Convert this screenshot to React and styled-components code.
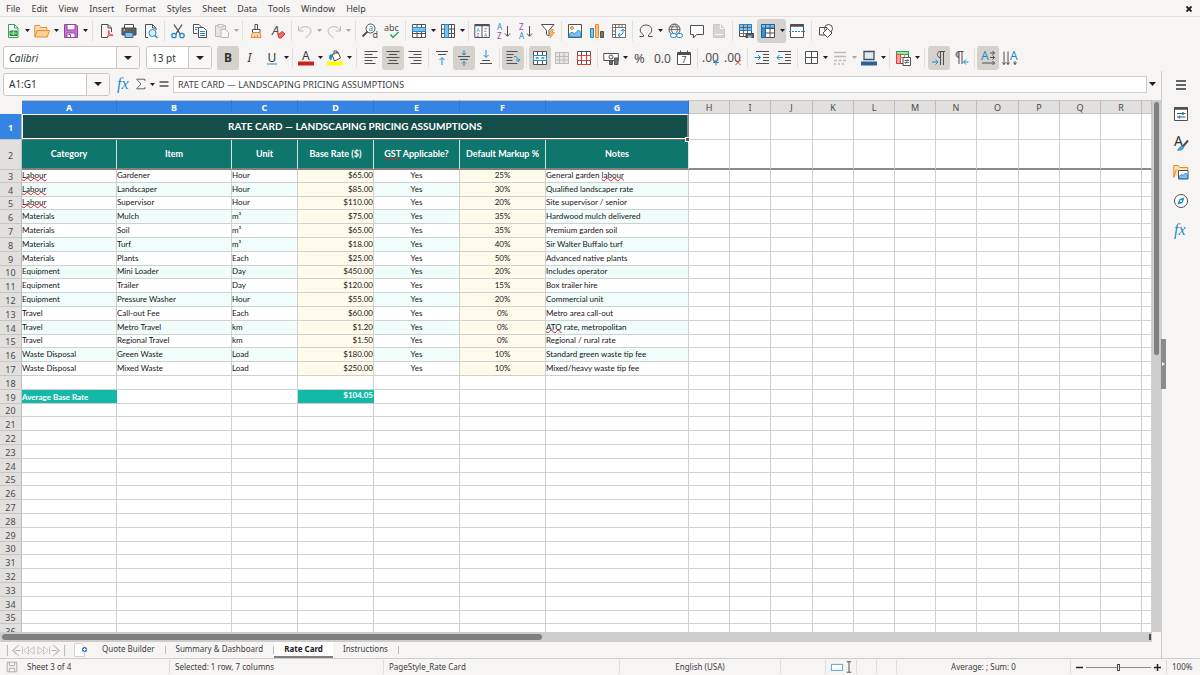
import { useState } from 'react';
import styled, { createGlobalStyle, css } from 'styled-components';

const GlobalStyle = createGlobalStyle`
  * {
    box-sizing: border-box;
  }
  body {
    margin: 0;
    overflow: hidden;
    background: #f6f5f4;
    color: #3d3d3d;
    font-family: "Noto Sans", sans-serif;
    font-size: 9px;
    line-height: 12px;
  }
  button, input, select {
    font: inherit;
    color: inherit;
    margin: 0;
    padding: 0;
    border: none;
    outline: none;
    background: none;
  }
`;

const Window = styled.div`
  display: flex;
  flex-direction: column;
  height: 100vh;
`;

const MenuBar = styled.nav`
  display: flex;
  align-items: center;
  height: 17px;
  padding: 1px 0 0 1px;
  border-bottom: 1px solid #e3e1df;
`;

const MenuItem = styled.button`
  padding: 0 6px 0 5px;
`;

const CloseButton = styled.button`
  display: flex;
  margin-left: auto;
  padding: 0 3px;
`;

const Toolbar = styled.div`
  display: flex;
  align-items: center;
  height: 27px;
  padding-left: 2px;
`;

const ToolButton = styled.button`
  display: flex;
  flex: none;
  align-items: center;
  justify-content: center;
  width: 22px;
  height: 24px;
  border-radius: ${({ $joined }) => ($joined ? '3px 0 0 3px' : '3px')};
  background: ${({ $on }) => ($on ? '#d5d1cd' : 'none')};
  opacity: ${({ disabled }) => (disabled ? 0.35 : 1)};
`;

const CaretButton = styled.button`
  display: flex;
  flex: none;
  align-items: center;
  justify-content: center;
  width: 7px;
  height: 24px;
  border-radius: 0 3px 3px 0;
  background: ${({ $on }) => ($on ? '#d5d1cd' : 'none')};
  opacity: ${({ disabled }) => (disabled ? 0.35 : 1)};
`;

const Separator = styled.span`
  flex: none;
  width: 1px;
  height: 20px;
  margin: ${({ $wide }) => ($wide ? '0 3px' : '0 2px')};
  background: #e2e0dd;
`;

const Combo = styled.div`
  display: flex;
  flex: none;
  width: ${({ $width }) => $width}px;
  height: 23px;
  margin: 0 5px 0 1px;
  border: 1px solid #cdc7c2;
  border-radius: 3px;
  background: #fff;
  overflow: hidden;
`;

const comboText = css`
  flex: 1;
  min-width: 0;
  padding-left: 5px;
  font-size: 10px;
  color: #2e3436;
  appearance: none;
`;

const ComboSelect = styled.select`
  ${comboText}
  font-style: ${({ $italic }) => ($italic ? 'italic' : 'normal')};
`;

const ComboInput = styled.input`
  ${comboText}
`;

const ComboArrow = styled.span`
  display: flex;
  align-items: center;
  justify-content: center;
  width: 23px;
  border-left: 1px solid #cdc7c2;
  background: #f8f7f6;
  pointer-events: none;
`;

const Main = styled.div`
  display: flex;
  flex: 1;
  min-height: 0;
`;

const Workspace = styled.main`
  display: flex;
  flex: 1;
  flex-direction: column;
  min-width: 0;
`;

const FormulaBar = styled.div`
  display: flex;
  align-items: center;
  height: 29px;
  padding: 0 5px 3px 2px;
`;

const FormulaButton = styled.button`
  display: flex;
  flex: none;
  align-items: center;
  justify-content: center;
  width: ${({ $wide }) => ($wide ? 18 : 16)}px;
  height: 24px;
`;

const FormulaInput = styled.input`
  flex: 1;
  min-width: 0;
  height: 17px;
  margin: 0 2px 0 1px;
  padding-left: 4px;
  border: 1px solid #d0ccc9;
  background: #fff;
`;

const SheetArea = styled.div`
  display: flex;
  flex: 1;
  min-height: 0;
`;

const SheetView = styled.div`
  flex: 1;
  min-width: 0;
  overflow: hidden;
  background: #fff;
`;

const Grid = styled.table`
  width: 100%;
  table-layout: fixed;
  border-spacing: 0;
  font-family: Lato, sans-serif;
  font-size: 8px;
  line-height: 11px;
  color: #141414;
`;

const ColumnHead = styled.th`
  height: 14px;
  padding: 0;
  border-top: 1px solid #c6c6c6;
  border-right: 1px solid ${({ $on }) => ($on ? '#2f78d2' : '#bdbdbd')};
  border-bottom: 1px solid ${({ $on }) => ($on ? '#3584e4' : '#c6c6c6')};
  background: ${({ $on }) => ($on ? '#3584e4' : '#e1e0df')};
  color: ${({ $on }) => ($on ? '#fff' : '#4a4a4a')};
  font-family: "Noto Sans", sans-serif;
  font-size: 9px;
  font-weight: ${({ $on }) => ($on ? 700 : 400)};
`;

const Corner = styled.th`
  padding: 0;
  background: #f6f5f4;
`;

const RowHead = styled.th`
  padding: 1px 0 0;
  border-right: 1px solid #bdbdbd;
  border-bottom: 1px solid #c6c6c6;
  background: ${({ $on }) => ($on ? '#3584e4' : '#e1e0df')};
  color: ${({ $on }) => ($on ? '#fff' : '#4a4a4a')};
  font-family: "Noto Sans", sans-serif;
  font-size: 9px;
  font-weight: ${({ $on }) => ($on ? 700 : 400)};
`;

const Row = styled.tr`
  height: ${({ $height }) => $height}px;
`;

const Cell = styled.td`
  padding: 0 0 1px;
  border-right: 1px solid #d0d0d0;
  border-bottom: 1px solid #d0d0d0;
  background: ${({ $fill }) => $fill || '#fff'};
  text-align: ${({ $align }) => $align || 'left'};
  white-space: nowrap;
  overflow: hidden;
`;

const TotalCell = styled(Cell)`
  padding-bottom: 0;
  border-right-color: #14b8a6;
  color: #fff;
  font-weight: 700;
  vertical-align: ${({ $low }) => ($low ? 'bottom' : 'top')};
`;

const TitleCell = styled.td`
  position: relative;
  padding: 0 0 1px;
  border: 1px solid #fff;
  border-right: 2px solid #7d8a89;
  border-bottom: 1px solid #6b6b6b;
  box-shadow: inset 0 -1px #fff;
  background: #134e4a;
  color: #fff;
  font-size: 10px;
  font-weight: 700;
  text-align: center;
`;

const FillHandle = styled.span`
  position: absolute;
  right: -3px;
  bottom: -3px;
  width: 5px;
  height: 5px;
  border: 1px solid #fff;
  background: #555;
`;

const HeadingCell = styled.td`
  padding: 0 0 2px;
  border-right: 1px solid #d5e6e4;
  border-bottom: 2px solid #7f7f7f;
  background: #0f766e;
  color: #fff;
  font-size: 9px;
  font-weight: 700;
  text-align: center;
  white-space: nowrap;
`;

const FrozenCell = styled(Cell)`
  border-bottom: 2px solid #8a8a8a;
`;

const Misspelt = styled.span`
  text-decoration: underline wavy #e01b24 1px;
  text-underline-offset: -1px;
  text-decoration-skip-ink: none;
`;

const VerticalScroll = styled.div`
  flex: none;
  width: 9px;
  padding: 2px;
  background: #cdcdcd;
`;

const VerticalThumb = styled.div`
  width: 5px;
  height: 48%;
  border-radius: 3px;
  background: #7f807f;
`;

const HorizontalScroll = styled.div`
  display: flex;
  justify-content: space-between;
  height: 10px;
  margin-right: 9px;
  padding: 2px 1px 2px 2px;
  background: #cdcdcd;
`;

const HorizontalThumb = styled.div`
  width: 47%;
  border-radius: 3px;
  background: #7f807f;
`;

const SplitMark = styled.span`
  width: 2px;
  background: #4a4a4a;
`;

const TabBar = styled.div`
  display: flex;
  align-items: stretch;
  height: 16px;
  font-size: 8px;
`;

const TabNav = styled.div`
  display: flex;
  align-items: center;
  padding: 0 6px;
`;

const NavButton = styled.button`
  display: flex;
`;

const AddButton = styled(NavButton)`
  margin-right: 4px;
`;

const SheetTab = styled.button`
  padding: 0 10px;
  border-bottom: 2px solid ${({ $on }) => ($on ? '#7f7f7f' : 'transparent')};
  background: ${({ $on }) => ($on ? '#fff' : 'none')};
  color: ${({ $on }) => ($on ? '#1a1a1a' : '#3d3d3d')};
  font-weight: ${({ $on }) => ($on ? 700 : 400)};
`;

const TabDivider = styled.span`
  align-self: center;
  width: 1px;
  height: 8px;
  background: #bdbab7;
`;

const Sidebar = styled.aside`
  position: relative;
  display: flex;
  flex: none;
  flex-direction: column;
  align-items: center;
  gap: 7px;
  width: 39px;
  padding-top: 3px;
  border-left: 1px solid #cfcbc8;
`;

const SidebarButton = styled.button`
  display: flex;
  align-items: center;
  justify-content: center;
  width: 22px;
  height: 22px;
`;

const SidebarGrip = styled.button`
  position: absolute;
  top: 268px;
  left: -1px;
  display: flex;
  align-items: center;
  justify-content: center;
  width: 5px;
  height: 50px;
  background: #8b8b8b;
`;

const StatusBar = styled.footer`
  display: grid;
  grid-template-columns: 170fr 214fr 236fr 161fr 45fr 31fr 20fr 20fr 174fr 96px 33px;
  height: 17px;
  border-top: 1px solid #cfcbc8;
  font-size: 8px;
`;

const StatusItem = styled.div`
  display: flex;
  align-items: center;
  justify-content: ${({ $align }) => $align || 'flex-start'};
  gap: ${({ $gap }) => $gap || 0}px;
  min-width: 0;
  padding: 0 5px;
  margin: 1px 0;
  border-right: ${({ $last }) => ($last ? 'none' : '1px solid #dedbd8')};
  white-space: nowrap;
`;

const ZoomSlider = styled.input`
  flex: 1;
  min-width: 0;
  height: 10px;
  appearance: none;
  &::-webkit-slider-runnable-track {
    height: 1px;
    background: #8b8b8b;
  }
  &::-webkit-slider-thumb {
    appearance: none;
    width: 3px;
    height: 7px;
    margin-top: -3px;
    border: 1px solid #4a4a4a;
    background: #f6f5f4;
  }
`;

const Drawing = styled.svg`
  flex: none;
  overflow: visible;
`;

const INK = '#4f4f4f';
const BLUE = '#1e8bcd';
const SKY = '#83beec';
const ORANGE = '#ed8733';
const RED = '#ed3d3b';

const gridLines = 'M1.5 2.5h13v11h-13zM1.5 6.5h13M1.5 10h13M5.5 2.5v11M10 2.5v11';
const glyph = { fontFamily: 'Noto Sans', stroke: 'none' };

const icons = {
  close: <path d="M5.500 5.500l5 5M10.500 5.500l-5 5" stroke="#222" strokeWidth="1.800" />,
  newSheet: (
    <>
      <path d="M3.500 1.500h6l3.500 3.500v9.500h-9.500z" fill="#fff" stroke="#31a354" />
      <path d="M9.500 1.500v3.500h3.500" stroke="#31a354" />
      <path d="M5 8h7v4.500h-7z" fill="#46b35c" stroke="#18823a" />
      <path d="M5 10.200h7M8.500 8v4.500" stroke="#c7edcc" strokeWidth=".7" />
    </>
  ),
  open: (
    <>
      <path d="M.8 13.500v-11h4.500l1.500 2h6v3" fill="#fbe0b4" stroke={ORANGE} />
      <path d="M3 7.500h12.500l-2.200 6.500h-12.500z" fill="#fcd18d" stroke={ORANGE} />
    </>
  ),
  save: (
    <>
      <path d="M1.500 1.500h11.500l1.500 1.500v11.500h-13z" fill="#c777d2" stroke="#9a3faa" />
      <path d="M4 1.500h8v5.500h-8zM4 10h8v4.500h-8z" fill="#fff" stroke="#9a3faa" />
      <path d="M5.500 11.500h2v3" stroke="#9a3faa" />
    </>
  ),
  pdf: (
    <>
      <path d="M9 14.500h-6.500v-13h6.500l3.500 3.500v4M9 1.500v3.500h3.500" fill="none" stroke={INK} />
      <path d="M8 14.500c2-3 2.500-5 2-6.500s-1.500 1 .5 3.200 4 1.500 3.500.8-3-.5-6 2.500" stroke={RED} />
    </>
  ),
  print: (
    <>
      <path d="M3.500 5v-3.500h9v3.500" fill="#fff" stroke={INK} />
      <path d="M1 5h14v7h-14z" fill="#5d6266" stroke="#44484b" />
      <path d="M4 9.500h8v5h-8z" fill={SKY} stroke="#31678e" />
      <path d="M2.500 7h1.500" stroke="#fff" />
    </>
  ),
  preview: (
    <>
      <path d="M5 14.500h-2.500v-13h7l3.500 3.500v2M9.500 1.500v3.500h3.500" stroke={INK} />
      <circle cx="9.500" cy="10" r="3.500" fill="#d8ecfa" stroke={BLUE} />
      <path d="M12 12.500l2.500 2.500" stroke={BLUE} strokeWidth="1.500" />
    </>
  ),
  cut: (
    <>
      <path d="M4 1.500l6.500 10M12 1.500l-6.500 10" stroke={INK} strokeWidth="1.300" />
      <circle cx="4" cy="12.500" r="2.200" stroke={BLUE} strokeWidth="1.300" />
      <circle cx="12" cy="12.500" r="2.200" stroke={BLUE} strokeWidth="1.300" />
    </>
  ),
  copy: (
    <>
      <path d="M5.500 10.500h-4v-9h5.500l2.500 2.500" fill="#fff" stroke={INK} />
      <path d="M6.500 4.500h5l3 3v7h-8z" fill="#fff" stroke={INK} />
      <path d="M8 8.500h5M8 10.500h5M8 12.500h5M3 4.500h3M3 6.500h2" stroke={BLUE} />
    </>
  ),
  paste: (
    <>
      <path d="M1.500 2.500h10v11h-10z" fill="#c9c9c9" stroke={INK} />
      <path d="M4 1.500h5v2.500h-5z" fill="#fff" stroke={INK} />
      <path d="M7 6.500h4.500l3 3v5h-7.500z" fill="#fff" stroke={INK} />
    </>
  ),
  brush: (
    <>
      <path d="M7 1.500h2.500v5h-2.500zM4.500 6.500h7.500v3h-7.500z" fill="#fff" stroke={INK} />
      <path d="M4.500 9.500l-1.500 5h10l-1-5" fill="#fcd6a1" stroke={ORANGE} />
      <path d="M6.500 12.500v2M9.500 12v2.500" stroke={ORANGE} />
    </>
  ),
  clear: (
    <>
      <text x="2" y="11.500" fontSize="13" fontStyle="italic" fill={INK} {...glyph}>A</text>
      <path d="M8 12l4-3.500 3 2.500-4 4h-2z" fill="#f06a6a" stroke="#d33" />
    </>
  ),
  undo: <path d="M1.500 3v5h5M2 7.500c3-6 12-4.500 12 .5 0 3-2.500 4.500-5.500 6.500" stroke={INK} />,
  redo: <path d="M14.500 3v5h-5M14 7.500c-3-6-12-4.500-12 .5 0 3 2.500 4.500 5.500 6.500" stroke={INK} />,
  find: (
    <>
      <circle cx="8.500" cy="5.500" r="4.500" fill="#fff" stroke={INK} />
      <path d="M5.500 8.500l-5 5" stroke={INK} strokeWidth="1.800" />
      <text x="6.500" y="7.500" fontSize="8" fill={BLUE} {...glyph}>a</text>
      <text x="10.500" y="15" fontSize="9" fill={INK} {...glyph}>d</text>
    </>
  ),
  spell: (
    <>
      <text x="0" y="8" fontSize="9" fill={INK} {...glyph}>abc</text>
      <path d="M6.500 11.500l2.500 3 5.500-5.500" stroke="#27a65a" strokeWidth="1.500" />
    </>
  ),
  row: (
    <>
      <path d="M1.500 1.500h13v13h-13zM1.500 10.500h13M6 1.500v13M10.500 1.500v13" fill="#fff" stroke={INK} />
      <path d="M1.500 4.500h13v4h-13z" fill={SKY} stroke={BLUE} />
    </>
  ),
  column: (
    <>
      <path d="M1.500 1.500h13v13h-13zM1.500 6h13M1.500 10.500h13M11.500 1.500v13" fill="#fff" stroke={INK} />
      <path d="M4.500 1.500h4v13h-4z" fill={SKY} stroke={BLUE} />
    </>
  ),
  sort: (
    <>
      <path d="M.8 1.500h14.500v13h-14.500zM8 1.500v13" fill="#fff" stroke={INK} />
      <path d="M.8 2.300h14.500" stroke={INK} strokeWidth="1.800" />
      <text x="2.500" y="8.500" fontSize="5" fill={BLUE} {...glyph}>A</text>
      <text x="2.500" y="14" fontSize="5" fill="#a148b5" {...glyph}>Z</text>
      <text x="10" y="8.500" fontSize="5" fill="#a148b5" {...glyph}>Z</text>
      <text x="10" y="14" fontSize="5" fill={BLUE} {...glyph}>A</text>
    </>
  ),
  sortUp: (
    <>
      <text x="1" y="6.500" fontSize="8" fill={BLUE} {...glyph}>A</text>
      <text x="1" y="15.500" fontSize="8" fill="#a148b5" {...glyph}>Z</text>
      <path d="M11.500 3v10M9 10.500l2.500 2.800 2.500-2.800" stroke={INK} />
    </>
  ),
  sortDown: (
    <>
      <text x="1" y="6.500" fontSize="8" fill="#a148b5" {...glyph}>Z</text>
      <text x="1" y="15.500" fontSize="8" fill={BLUE} {...glyph}>A</text>
      <path d="M11.500 3v10M9 10.500l2.500 2.800 2.500-2.800" stroke={INK} />
    </>
  ),
  filter: (
    <>
      <path d="M1.500 1.500h12.500l-5 6v5.500l-2.500-1.500v-4z" fill="#fff" stroke={INK} />
      <path d="M11.500 6.500l-2.500 4.500h2l-1 4 4.500-5.500h-2.500l1.500-3z" fill="#fcc27a" stroke={ORANGE} strokeWidth=".8" />
    </>
  ),
  image: (
    <>
      <path d="M1.500 1.500h13v13h-13z" fill="#fff" stroke={INK} />
      <circle cx="5" cy="5" r="1.500" fill="#fcc27a" stroke={ORANGE} />
      <path d="M2 14v-2.500l3-2.500 2.500 2 4-4 2.500 2.500v4.500z" fill={SKY} stroke={BLUE} />
    </>
  ),
  chart: (
    <>
      <path d="M1.500 5.500h3v9h-3z" fill={SKY} stroke={BLUE} />
      <path d="M6.500 1.500h3v13h-3z" fill="#fcc27a" stroke={ORANGE} />
      <path d="M11.500 8.500h3v6h-3z" fill="#777" stroke={INK} />
    </>
  ),
  pivot: (
    <>
      <path d="M1.500 1.500h13v13h-13zM1.500 4.500h13M4.500 1.500v13M8 1.500v3M11 1.500v3M1.500 8h3M1.500 11.500h3" fill="#fff" stroke={INK} strokeWidth=".8" />
      <path d="M7.500 12h2.500l2-2v-3.500M9 9.800l-2 2.200 2 2.200M9.800 8.200l2.200-2 2.200 2" stroke={BLUE} />
    </>
  ),
  omega: <path d="M1.500 13.500h4v-1.500c-6-4-3-10 2.500-10s8.500 6 2.500 10v1.500h4" stroke={INK} />,
  link: (
    <>
      <circle cx="7.500" cy="6.500" r="5.500" stroke={INK} />
      <path d="M2 6.500h11M7.500 1c-4 4-4 7 0 11M7.500 1c4 4 4 7 0 11M3 3.800h9" stroke={INK} strokeWidth=".8" />
      <rect x="3.500" y="10.500" width="6" height="4" rx="2" fill="#f6f5f4" stroke={BLUE} />
      <rect x="9.500" y="10.500" width="6" height="4" rx="2" fill="#f6f5f4" stroke={BLUE} />
    </>
  ),
  comment: <path d="M1.500 2.500h13v9h-7l-3 3.500v-3.500h-3z" fill="#fff" stroke={INK} />,
  pageHeader: (
    <>
      <path d="M2.500 1.500h7l4 4v9h-11z" fill="#999" stroke="#777" />
      <path d="M4 11.500h8M9.500 1.500v4h4" stroke="#fff" />
    </>
  ),
  printArea: (
    <>
      <path d="M1.500 1.500h12v12h-12z" fill="#fff" stroke={INK} />
      <path d="M1.500 1.500h12v6h-12z" fill={SKY} stroke={BLUE} />
      <path d="M1.500 4.500h12M5.500 1.500v12M9.500 1.500v12M1.500 10.500h12" stroke={INK} strokeWidth=".8" />
      <path d="M8 10.500h7.500v4h-7.500z" fill="#5d6266" stroke="#44484b" />
      <path d="M10 12.500h3.500v2.500h-3.500z" fill={SKY} />
    </>
  ),
  freeze: (
    <>
      <path d="M1.500 1.500h13v13h-13zM5.500 5.500h9M5.500 10h9M10 1.500v13" fill="#fff" stroke={INK} />
      <path d="M1.500 1.500h4v13h-4z" fill="#3a8fd0" stroke="#1c659c" />
      <path d="M1.500 1.500h13v3.500h-13z" fill={SKY} stroke="#1c659c" />
      <path d="M5.500 1.500v3.500M10 1.500v3.500" stroke="#1c659c" />
    </>
  ),
  split: (
    <>
      <path d="M1.500 1.500h13v13h-13z" fill="#fff" stroke={INK} />
      <path d="M1.500 2.500h13" stroke={INK} strokeWidth="2.500" />
      <path d="M0 8.500h16" stroke={BLUE} strokeDasharray="2 1" />
    </>
  ),
  shapes: (
    <>
      <circle cx="10.500" cy="5.500" r="4" fill="#fff" stroke={INK} />
      <path d="M1.500 4.500h7.500v7.500h-7.500z" stroke={INK} />
      <path d="M9.500 5.500l4.500 4.500-4.500 4.500-4.500-4.500z" fill="#fff" stroke={INK} />
    </>
  ),
  bold: <text x="4" y="12" fontSize="12" fontWeight="700" fill="#333" {...glyph}>B</text>,
  italic: <text x="5.500" y="12" fontSize="12" fontStyle="italic" fill="#333" {...glyph}>I</text>,
  underline: (
    <>
      <text x="3.500" y="12" fontSize="12" fill="#333" {...glyph}>U</text>
      <path d="M3 14h10" stroke={BLUE} />
    </>
  ),
  fontColor: (
    <>
      <text x="4" y="10" fontSize="12" fill="#333" {...glyph}>A</text>
      <path d="M0 13.500h16" stroke="#c9211e" strokeWidth="4" />
    </>
  ),
  fillColor: (
    <>
      <path d="M5 4.500l6-2.500 2.500 6-6 3z" fill="#fff" stroke={INK} />
      <path d="M7 4.500v-3.500h3v3" stroke={INK} />
      <path d="M3 5h2l-1 5-1.500-2z" fill={BLUE} stroke={BLUE} />
      <path d="M0 13.500h16" stroke="#ff0" strokeWidth="4" />
    </>
  ),
  alignLeft: <path d="M1.500 1.500h13M1.500 4.500h8M1.500 7.500h13M1.500 10.500h8M1.500 13.500h11" stroke={INK} />,
  alignCenter: <path d="M1.500 1.500h13M4 4.500h8M1.500 7.500h13M4 10.500h8M2.500 13.500h11" stroke={INK} />,
  alignRight: <path d="M1.500 1.500h13M6.500 4.500h8M1.500 7.500h13M6.500 10.500h8M3.500 13.500h11" stroke={INK} />,
  alignTop: (
    <>
      <path d="M2 1.500h12M4 4.500h8" stroke={INK} />
      <path d="M8 15v-7M5.500 10l2.500-2.500 2.500 2.500" stroke={BLUE} />
    </>
  ),
  alignMiddle: (
    <>
      <path d="M2 6.500h12M4 9.500h8" stroke={INK} />
      <path d="M8 0v5M6 3l2 2 2-2M8 16v-4.500M6 13.500l2-2 2 2" stroke={BLUE} />
    </>
  ),
  alignBottom: (
    <>
      <path d="M4 10.500h8M2 13.500h12" stroke={INK} />
      <path d="M8 0v7M5.500 5l2.500 2.500 2.500-2.500" stroke={BLUE} />
    </>
  ),
  wrap: (
    <>
      <path d="M1.500 1.500h11M1.500 4.500h7M1.500 7.500h6M1.500 10.500h6M1.500 13.500h11" stroke={INK} />
      <path d="M9 6.500c3 0 4 1.500 4.500 4M11 9.500l2.500 2 1.500-2.500" stroke={BLUE} />
    </>
  ),
  merge: (
    <>
      <path d="M1.500 1.500h13v13h-13zM5.500 1.500v13M10.500 1.500v13" fill="#fff" stroke={INK} />
      <path d="M1.500 5.500h13v5h-13z" fill="#fff" stroke={BLUE} />
      <path d="M3.500 8h3.500M9 8h3.500M5 6.800v2.400M11 6.800v2.400" stroke={BLUE} />
    </>
  ),
  mergeCells: <path d={gridLines} fill="#ccc" stroke={INK} />,
  unmerge: (
    <>
      <path d="M1.500 1.500h13v13h-13zM5.500 1.500v13M10.500 1.500v13" fill="#fff" stroke={INK} />
      <path d="M1.500 5.500h13v5h-13zM5.500 5.500v5M10.500 5.500v5M1.500 14.500h13" fill="#fff" stroke={RED} />
    </>
  ),
  currency: (
    <>
      <path d="M.8 3.500h14.500v7h-14.500z" fill="#fff" stroke={INK} />
      <circle cx="8" cy="7" r="2" stroke={INK} />
      <path d="M6.500 11h3v3.500h-3zM11.500 8h3.500v6.500h-3.500z" fill="#777" stroke={INK} />
    </>
  ),
  percent: <text x="2" y="12.500" fontSize="13" fill={INK} {...glyph}>%</text>,
  number: <text x="0" y="12.500" fontSize="12" fill={INK} {...glyph}>0.0</text>,
  date: (
    <>
      <path d="M1.500 2.500h13v12h-13zM4.500 .5v3M11.500 .5v3" fill="#fff" stroke={INK} />
      <path d="M1.500 4h13" stroke={INK} strokeWidth="2" />
      <text x="5.500" y="13" fontSize="9" fill={INK} {...glyph}>7</text>
    </>
  ),
  addDecimal: (
    <>
      <text x="-1" y="12" fontSize="12" fill={INK} {...glyph}>.00</text>
      <path d="M13 9.500v6M10 12.500h6" stroke={BLUE} />
    </>
  ),
  dropDecimal: (
    <>
      <text x="-1" y="12" fontSize="12" fill={INK} {...glyph}>.00</text>
      <path d="M10.500 10l5 5M15.500 10l-5 5" stroke={RED} />
    </>
  ),
  indent: (
    <>
      <path d="M2 1.500h13M9 4.500h6M9 7.500h6M9 10.500h6M2 13.500h13" stroke={INK} />
      <path d="M.5 7.500h6M4 5l2.500 2.500-2.500 2.500" stroke={BLUE} />
    </>
  ),
  outdent: (
    <>
      <path d="M2 1.500h13M9 4.500h6M9 7.500h6M9 10.500h6M2 13.500h13" stroke={INK} />
      <path d="M1 7.500h6M3.500 5l-2.500 2.500 2.500 2.500" stroke={BLUE} />
    </>
  ),
  borders: <path d="M2.500 1.500h12v12h-12zM8.500 1.500v12M2.500 7.500h12" fill="#fff" stroke={INK} />,
  borderStyle: <path d="M2 2.500h12M2 6.500h12M2 10.500h3M6.500 10.500h3M11 10.500h3M2 14h2M6 14h2M10 14h2" stroke={INK} strokeWidth="1.500" />,
  borderColor: (
    <>
      <path d="M3 1.500h10v8h-10z" fill="#d8ecfa" stroke={INK} strokeWidth="1.300" />
      <path d="M0 13.500h16" stroke="#2a6099" strokeWidth="4" />
    </>
  ),
  conditional: (
    <>
      <path d="M1.500 1.500h12v12h-12z" fill="#fff" stroke={INK} />
      <path d="M1.500 1.500h12v3h-12z" fill="#9be0ae" stroke="#27a65a" />
      <path d="M1.500 4.500h4v9h-4z" fill="#f9a0a0" stroke={RED} />
      <path d="M5.500 7.500h8M9.500 4.500v4" stroke={ORANGE} />
      <path d="M8 7.500h7.500v8h-7.500z" fill="#fff" stroke={INK} />
      <path d="M9.500 10.500h4.500M9.500 12.500h4.500M13 9l-2.500 5" stroke={INK} strokeWidth=".8" />
    </>
  ),
  ltr: (
    <>
      <path d="M14 1.500h-5c-3.500 0-3.500 6 0 6M9.500 1.500v13.500M12.500 1.500v13.500" fill="none" stroke={INK} />
      <path d="M1 12h6M4.500 9.500l2.500 2.500-2.500 2.500" stroke={BLUE} />
    </>
  ),
  rtl: (
    <>
      <path d="M6 1.500c-4 0-4 6 0 6z" fill="#aaa" />
      <path d="M10.500 1.500h-4.500c-4 0-4 6 0 6M6 1.500v12.500M9 1.500v12.500" stroke={INK} />
      <path d="M15.500 12h-5M13 9.500l-2.500 2.500 2.500 2.500" stroke={BLUE} />
    </>
  ),
  textAcross: (
    <>
      <text x="1" y="10" fontSize="12" fill={BLUE} {...glyph}>A</text>
      <path d="M10 3h4.500M10 7.500h4.500M2 13h12.500M12.500 1l2 2-2 2M12.500 5.500l2 2-2 2M12.500 11l2 2-2 2" stroke={INK} />
    </>
  ),
  textDown: (
    <>
      <path d="M2 1.500v13M6 1.500v13M13 11v3.500M.500 12.500l1.500 2 1.500-2M4.500 12.500l1.500 2 1.500-2M11.500 12.500l1.500 2 1.500-2" stroke={INK} />
      <text x="8" y="10" fontSize="12" fill={BLUE} {...glyph}>A</text>
    </>
  ),
  fx: <text x="1" y="12.500" fontSize="16" fontStyle="italic" fontFamily="Liberation Serif" fill={BLUE}>fx</text>,
  sigma: <path d="M12.500 4.500v-2h-9.500l5 5.500-5 5.500h9.500v-2" stroke={INK} />,
  equals: <path d="M3.500 6h9M3.500 10h9" stroke={INK} strokeWidth="1.500" />,
  hamburger: <path d="M3 4h10M3 8h10M3 12h10" stroke="#2e3436" strokeWidth="1.500" />,
  properties: (
    <>
      <path d="M1.500 1.500h13v13h-13z" fill="#fff" stroke={INK} />
      <path d="M1.500 2.500h13" stroke={INK} strokeWidth="2.500" />
      <path d="M4 7.500h8.500M4 11h8.500" stroke={INK} />
      <path d="M10 6v3M6.500 9.500v3" stroke={BLUE} strokeWidth="1.500" />
    </>
  ),
  styles: (
    <>
      <text x="1" y="11" fontSize="14" fill="#333" {...glyph}>A</text>
      <path d="M15 5.500l-5 6" stroke={INK} strokeWidth="2" />
      <path d="M4.500 15c3 .5 5.500-.500 6-2.500l-1.800-1.500c-2 .5-2 2.500-4.200 4z" fill="#4fa3dc" stroke={BLUE} />
    </>
  ),
  gallery: (
    <>
      <path d="M.8 13.500v-12h4.500l1.500 2h8v3" fill="#fbe0b4" stroke={ORANGE} />
      <path d="M.8 13.500l2.500-8" stroke={ORANGE} />
      <path d="M5.500 6.500h9.500v8.500h-9.500z" fill="#fff" stroke={INK} />
      <path d="M6 14.500v-2l2.500-2 1.500 1 2.500-2.500 2 2v3.500z" fill={SKY} stroke={BLUE} />
    </>
  ),
  navigator: (
    <>
      <circle cx="8" cy="8" r="6.500" fill="#fff" stroke={INK} />
      <path d="M11.500 4.500l-2 5.500-5 1.500 2-5.500z" fill={BLUE} />
      <circle cx="8" cy="8" r="1" fill="#fff" />
    </>
  ),
  first: <path d="M1.500 2v12M14 2l-7 6 7 6M9.500 8h6M11 4.500l-4 3.500 4 3.500" stroke="#b5b2af" />,
  previous: <path d="M8 4l-5 4 5 4zM14 4l-5 4 5 4zM1.500 4v8" stroke="#c4c1be" />,
  next: <path d="M2 4l5 4-5 4zM8 4l5 4-5 4zM14.500 4v8" stroke="#c4c1be" />,
  last: <path d="M14.500 2v12M2 2l7 6-7 6M.5 8h6M5 4.500l4 3.500-4 3.500" stroke="#b5b2af" />,
  addSheet: (
    <>
      <path d="M2.500 1.500h7l3 3v10h-10z" fill="#fff" stroke="#d5d2cf" />
      <circle cx="12.500" cy="7.500" r="2.500" fill="#2a6fb5" />
      <path d="M12.500 6v3M11 7.500h3" stroke="#fff" />
    </>
  ),
  disk: <path d="M2.500 2.500h11v11h-11zM5 2.500v4h6v-4M5 13.500v-4h6v4" stroke="#a5a2a0" />,
  insertMode: <path d="M.5 4.500h15v8h-15z" fill="#fff" stroke={BLUE} />,
  cursor: <path d="M8 1.500v13M5 1h6M5 15h6" stroke={INK} strokeWidth="1.300" />,
};

function Icon({ name, size = 16 }) {
  return (
    <Drawing width={size} height={size} viewBox="0 0 16 16" fill="none" aria-hidden="true">
      {icons[name]}
    </Drawing>
  );
}

function Caret({ big }) {
  return (
    <svg width={big ? 8 : 5} height={big ? 4 : 3} viewBox="0 0 8 4" preserveAspectRatio="none" aria-hidden="true">
      <path d="M0 0h8l-4 4z" fill="#1f1f1f" />
    </svg>
  );
}

// "|" and "||" are separators, "+" adds a menu arrow, "*" is pressed, "-" is disabled
const standardTools =
  'newSheet+ open+ save+ || pdf print preview | cut copy paste+- | brush clear | undo+- redo+- || find spell | row+ column+ | sort sortUp sortDown filter | image chart pivot | omega+ link comment pageHeader- | printArea freeze+* split || shapes';
const formatTools =
  'bold* italic underline+ | fontColor+ fillColor+ || alignLeft alignCenter* alignRight | alignTop alignMiddle* alignBottom | wrap* | merge* mergeCells- unmerge | currency+ percent number date | addDecimal dropDecimal || indent outdent | borders+ borderStyle+- borderColor+ | conditional+ || ltr* rtl | textAcross* textDown';

function Tools({ list }) {
  return list.split(' ').map((entry, i) => {
    if (entry[0] === '|') return <Separator key={i} $wide={entry.length > 1} />;
    const name = entry.replace(/[-+*]/g, '');
    const on = entry.includes('*');
    const off = entry.includes('-');
    const menu = entry.includes('+');
    return [
      <ToolButton key={name} aria-label={name} $on={on} $joined={menu} disabled={off}>
        <Icon name={name} />
      </ToolButton>,
      menu && (
        <CaretButton key={name + 'Menu'} aria-label={name + ' options'} $on={on} disabled={off}>
          <Caret />
        </CaretButton>
      ),
    ];
  });
}

const menus = ['File', 'Edit', 'View', 'Insert', 'Format', 'Styles', 'Sheet', 'Data', 'Tools', 'Window', 'Help'];

const columns = [
  ['A', 95], ['B', 115], ['C', 66], ['D', 76], ['E', 86], ['F', 86], ['G', 143],
  ['H', 41], ['I', 41], ['J', 42], ['K', 41], ['L', 41], ['M', 41], ['N', 41],
  ['O', 42], ['P', 41], ['Q', 41], ['R', 41],
];

const headings = ['Category', 'Item', 'Unit', 'Base Rate ($)', 'GST Applicable?', 'Default Markup %', 'Notes'];

const rates = [
  ['Labour', 'Gardener', 'Hour', '$65.00', '25%', 'General garden labour'],
  ['Labour', 'Landscaper', 'Hour', '$85.00', '30%', 'Qualified landscaper rate'],
  ['Labour', 'Supervisor', 'Hour', '$110.00', '20%', 'Site supervisor / senior'],
  ['Materials', 'Mulch', 'm³', '$75.00', '35%', 'Hardwood mulch delivered'],
  ['Materials', 'Soil', 'm³', '$65.00', '35%', 'Premium garden soil'],
  ['Materials', 'Turf', 'm³', '$18.00', '40%', 'Sir Walter Buffalo turf'],
  ['Materials', 'Plants', 'Each', '$25.00', '50%', 'Advanced native plants'],
  ['Equipment', 'Mini Loader', 'Day', '$450.00', '20%', 'Includes operator'],
  ['Equipment', 'Trailer', 'Day', '$120.00', '15%', 'Box trailer hire'],
  ['Equipment', 'Pressure Washer', 'Hour', '$55.00', '20%', 'Commercial unit'],
  ['Travel', 'Call-out Fee', 'Each', '$60.00', '0%', 'Metro area call-out'],
  ['Travel', 'Metro Travel', 'km', '$1.20', '0%', 'ATO rate, metropolitan'],
  ['Travel', 'Regional Travel', 'km', '$1.50', '0%', 'Regional / rural rate'],
  ['Waste Disposal', 'Green Waste', 'Load', '$180.00', '10%', 'Standard green waste tip fee'],
  ['Waste Disposal', 'Mixed Waste', 'Load', '$250.00', '10%', 'Mixed/heavy waste tip fee'],
];

const CREAM = '#fffbeb';
const MINT = '#f0fdfa';
const TEAL = '#14b8a6';

function Spelled({ text }) {
  return text
    .split(/([Ll]abour|ATO|GST)/)
    .map((part, i) => (i % 2 ? <Misspelt key={i}>{part}</Misspelt> : part));
}

function Blanks({ count, as: Kind = Cell }) {
  return Array.from({ length: count }, (_, i) => <Kind key={i} />);
}

function RateCells({ rate, fill }) {
  const [category, item, unit, price, markup, notes] = rate;
  return (
    <>
      <Cell $fill={fill}><Spelled text={category} /></Cell>
      <Cell $fill={fill}>{item}</Cell>
      <Cell $fill={fill}>{unit}</Cell>
      <Cell $fill={CREAM} $align="right">{price}</Cell>
      <Cell $fill={fill} $align="center">Yes</Cell>
      <Cell $fill={CREAM} $align="center">{markup}</Cell>
      <Cell $fill={fill}><Spelled text={notes} /></Cell>
      <Blanks count={12} />
    </>
  );
}

function TotalCells() {
  return (
    <>
      <TotalCell $fill={TEAL} $low>Average Base Rate</TotalCell>
      <Blanks count={2} />
      <TotalCell $fill={TEAL} $align="right">$104.05</TotalCell>
      <Blanks count={15} />
    </>
  );
}

function Sheet() {
  const bodyRows = Array.from({ length: 34 }, (_, i) => i + 3);
  return (
    <Grid>
      <colgroup>
        <col width="22" />
        {columns.map(([name, width]) => <col key={name} width={width} />)}
        <col />
      </colgroup>
      <thead>
        <tr>
          <Corner />
          {columns.map(([name], i) => <ColumnHead key={name} $on={i < 7}>{name}</ColumnHead>)}
          <ColumnHead />
        </tr>
      </thead>
      <tbody>
        <Row $height={26}>
          <RowHead $on>1</RowHead>
          <TitleCell colSpan={7}>
            RATE CARD — LANDSCAPING PRICING ASSUMPTIONS
            <FillHandle />
          </TitleCell>
          <Blanks count={12} />
        </Row>
        <Row $height={30}>
          <RowHead>2</RowHead>
          {headings.map((text) => (
            <HeadingCell key={text}><Spelled text={text} /></HeadingCell>
          ))}
          <Blanks count={12} as={FrozenCell} />
        </Row>
        {bodyRows.map((n) => (
          <Row key={n} $height={n === 3 || n % 5 === 0 ? 13 : 14}>
            <RowHead>{n}</RowHead>
            {n < 18 && <RateCells rate={rates[n - 3]} fill={n % 2 ? '#fff' : MINT} />}
            {n === 19 && <TotalCells />}
            {(n === 18 || n > 19) && <Blanks count={19} />}
          </Row>
        ))}
      </tbody>
    </Grid>
  );
}

export default function App() {
  const [formula, setFormula] = useState('RATE CARD — LANDSCAPING PRICING ASSUMPTIONS');
  const [zoom, setZoom] = useState(100);
  const [tab, setTab] = useState('Rate Card');

  return (
    <Window>
      <GlobalStyle />
      <MenuBar>
        {menus.map((name) => <MenuItem key={name}>{name}</MenuItem>)}
        <CloseButton aria-label="Close"><Icon name="close" /></CloseButton>
      </MenuBar>
      <Toolbar>
        <Tools list={standardTools} />
      </Toolbar>
      <Toolbar>
        <Combo $width={137}>
          <ComboSelect aria-label="Font name" $italic>
            <option>Calibri</option>
          </ComboSelect>
          <ComboArrow><Caret big /></ComboArrow>
        </Combo>
        <Combo $width={66}>
          <ComboSelect aria-label="Font size">
            <option>13 pt</option>
          </ComboSelect>
          <ComboArrow><Caret big /></ComboArrow>
        </Combo>
        <Tools list={formatTools} />
      </Toolbar>
      <Main>
        <Workspace>
          <FormulaBar>
            <Combo $width={107}>
              <ComboInput aria-label="Name box" defaultValue="A1:G1" />
              <ComboArrow><Caret big /></ComboArrow>
            </Combo>
            <FormulaButton aria-label="Function wizard" $wide><Icon name="fx" /></FormulaButton>
            <FormulaButton aria-label="Select function"><Icon name="sigma" size={14} /></FormulaButton>
            <CaretButton aria-label="Function options"><Caret /></CaretButton>
            <FormulaButton aria-label="Formula"><Icon name="equals" /></FormulaButton>
            <FormulaInput aria-label="Input line" value={formula} onChange={(e) => setFormula(e.target.value)} />
            <CaretButton aria-label="Expand formula bar"><Caret big /></CaretButton>
          </FormulaBar>
          <SheetArea>
            <SheetView><Sheet /></SheetView>
            <VerticalScroll><VerticalThumb /></VerticalScroll>
          </SheetArea>
          <HorizontalScroll>
            <HorizontalThumb />
            <SplitMark />
          </HorizontalScroll>
          <TabBar>
            <TabNav>
              {['first', 'previous', 'next', 'last'].map((name) => (
                <NavButton key={name} aria-label={name + ' sheet'}><Icon name={name} size={15} /></NavButton>
              ))}
            </TabNav>
            <AddButton aria-label="Add sheet"><Icon name="addSheet" /></AddButton>
            {['Quote Builder', 'Summary & Dashboard', 'Rate Card', 'Instructions'].map((name) => [
              <SheetTab key={name} $on={name === tab} onClick={() => setTab(name)}>{name}</SheetTab>,
              name !== 'Rate Card' && <TabDivider key={name + '|'} />,
            ])}
          </TabBar>
        </Workspace>
        <Sidebar>
          {['hamburger', 'properties', 'styles', 'gallery', 'navigator', 'fx'].map((name) => (
            <SidebarButton key={name} aria-label={name}><Icon name={name} /></SidebarButton>
          ))}
          <SidebarGrip aria-label="Hide sidebar">
            <svg width="3" height="4" viewBox="0 0 3 4"><path d="M0 0l3 2-3 2z" fill="#fff" /></svg>
          </SidebarGrip>
        </Sidebar>
      </Main>
      <StatusBar>
        <StatusItem $gap={8}><Icon name="disk" size={14} />Sheet 3 of 4</StatusItem>
        <StatusItem>Selected: 1 row, 7 columns</StatusItem>
        <StatusItem>PageStyle_Rate Card</StatusItem>
        <StatusItem $align="center">English (USA)</StatusItem>
        <StatusItem />
        <StatusItem><Icon name="insertMode" size={12} /><Icon name="cursor" size={12} /></StatusItem>
        <StatusItem />
        <StatusItem />
        <StatusItem $align="center">Average: ; Sum: 0</StatusItem>
        <StatusItem $gap={3}>
          <svg width="7" height="7" viewBox="0 0 7 7"><path d="M0 3.500h7" stroke="#222" strokeWidth="1.500" /></svg>
          <ZoomSlider type="range" min="0" max="200" aria-label="Zoom" value={zoom} onChange={(e) => setZoom(Number(e.target.value))} />
          <svg width="7" height="7" viewBox="0 0 7 7"><path d="M0 3.500h7M3.500 0v7" stroke="#222" strokeWidth="1.500" /></svg>
        </StatusItem>
        <StatusItem $last>{zoom}%</StatusItem>
      </StatusBar>
    </Window>
  );
}
